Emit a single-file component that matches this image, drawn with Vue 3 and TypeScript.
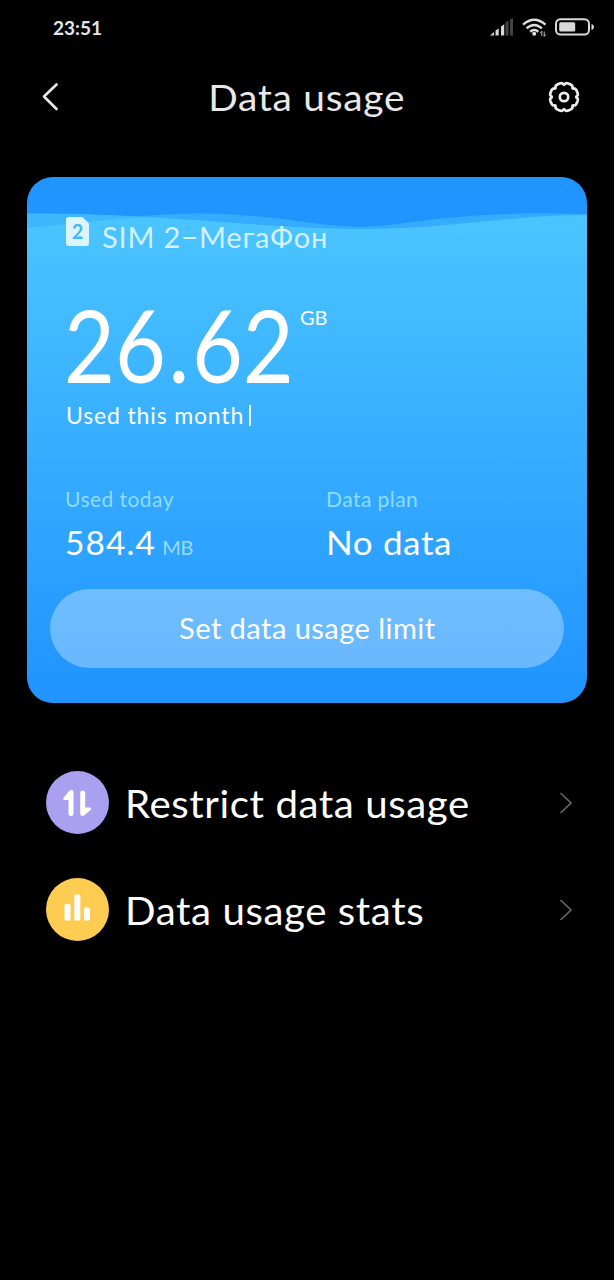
<script setup lang="ts">
interface MenuItem {
  label: string
  kind: 'arrows' | 'bars'
}

const items: MenuItem[] = [
  { label: 'Restrict data usage', kind: 'arrows' },
  { label: 'Data usage stats', kind: 'bars' },
]

// Gear outline: radius dips at evenly spaced notches around the rim.
const teeth = 8
const gearPath = Array.from({ length: 192 }, (_, i) => {
  const a = (i / 192) * Math.PI * 2
  const notch = Math.pow(Math.abs(Math.cos((a * teeth) / 2)), 12)
  const r = 14.1 - 1.9 * notch
  return `${i ? 'L' : 'M'}${(16 + r * Math.cos(a)).toFixed(2)} ${(16 + r * Math.sin(a)).toFixed(2)}`
}).join('') + 'Z'
</script>

<template>
  <div class="screen">
    <div class="status">
      <span class="clock">23:51</span>
      <svg class="indicators" width="106" height="20" viewBox="0 0 106 20">
        <g fill="#d8d8d8">
          <path d="M0 17.500 4 14v3.500zM5.500 12.500l3.200-2v7H5.500zM11 8.500l3.200-2.200v11.200H11z" />
          <path d="M15.500 4.500l3-2v15h-3zM20 1.800l3-2v17.700h-3z" fill="#444" />
        </g>
        <g fill="none" stroke="#e0e0e0" stroke-width="2.400">
          <path d="M33 6.700Q44.200-3.300 55.500 6.700M36.600 10.400Q44.200 3.500 51.900 10.400M40.200 13.700Q44.200 10.400 48.300 13.700" />
        </g>
        <circle cx="44.200" cy="15.800" r="2" fill="#e0e0e0" />
        <path d="M51.800 18v-5l-1.500 2M54.200 13.500v5l1.500-2" fill="none" stroke="#bbb" stroke-width="1" />
        <rect x="66" y="1.200" width="33" height="15.300" rx="4.500" fill="none" stroke="#d8d8d8" stroke-width="2" />
        <rect x="69.200" y="4.300" width="16" height="9.200" rx="1.500" fill="#d8d8d8" />
        <path d="M101.500 6q2.500.4 2.500 3t-2.500 3z" fill="#d8d8d8" />
      </svg>
    </div>

    <header class="bar">
      <svg class="back" width="20" height="30" viewBox="0 0 20 30">
        <path d="M16.500 2.500 4 14.500 16.500 27" fill="none" stroke="#e6e6e6" stroke-width="2.700" stroke-linecap="round" stroke-linejoin="round" />
      </svg>
      <h1 class="title">Data usage</h1>
      <svg class="gear" width="32" height="32" viewBox="0 0 32 32">
        <path :d="gearPath" fill="none" stroke="#ececec" stroke-width="2.700" stroke-linejoin="round" />
        <circle cx="16" cy="16" r="4.200" fill="none" stroke="#ececec" stroke-width="2.700" />
      </svg>
    </header>

    <section class="card">
      <svg class="waves" width="560" height="56" viewBox="0 0 560 56">
        <path d="M0 36.500C60 36 110 39 180 44S280 52 340 52C420 52 480 38.500 560 38V56H0Z" fill="#4ac3ff" fill-opacity=".75" />
        <path d="M0 51C60 46 90 38 170 36.500C240 36 290 50 335 50C390 47 420 36 520 36.500L560 37V56H0Z" fill="#4ac3ff" fill-opacity=".5" />
        <path d="M0 51C60 46 90 41 130 40.500C200 45 270 52 340 52C420 52 480 38.500 560 38V56H0Z" fill="#4ac3ff" />
      </svg>
      <div class="content">
        <div class="sim">
          <span class="sim-icon">
            <svg width="23" height="29" viewBox="0 0 23 29">
              <path d="M3 0h13.500L23 6.500V26a3 3 0 0 1-3 3H3a3 3 0 0 1-3-3V3a3 3 0 0 1 3-3z" fill="#dcf4ff" />
            </svg>
            <b>2</b>
          </span>
          <span class="sim-name">SIM 2−МегаФон</span>
        </div>
        <div class="total">
          <span class="amount">26<i>.</i>62</span>
          <span class="gb">GB</span>
        </div>
        <div class="month"><span>Used this month</span><i class="caret"></i></div>
        <div class="stats">
          <div>
            <div class="label">Used today</div>
            <div class="value"><span>584.4</span><small>MB</small></div>
          </div>
          <div>
            <div class="label">Data plan</div>
            <div class="value plan">No data</div>
          </div>
        </div>
        <button class="limit" type="button"><span>Set data usage limit</span></button>
      </div>
    </section>

    <nav class="list">
      <div v-for="item in items" :key="item.kind" class="row">
        <span class="badge" :class="item.kind">
          <svg v-if="item.kind === 'arrows'" width="63" height="63" viewBox="0 0 63 63">
            <path d="M23.500 19.500Q27.500 17.500 27.500 22V42.500a2.500 2.500 0 0 1-5 0V29H18.500q-2.500-.7-.5-2.700zM34.200 22a2.500 2.500 0 0 1 5 0V36.500h4.600q2.500.5.700 2.500l-6.500 5.500q-3.800 1.500-3.800-2z" fill="#fff" />
          </svg>
          <svg v-else width="63" height="63" viewBox="0 0 63 63" fill="#fff">
            <rect x="18.500" y="26" width="6" height="16.500" rx="1.500" />
            <rect x="28.300" y="16.500" width="6" height="26" rx="1.500" />
            <rect x="38" y="29.500" width="6" height="13" rx="1.500" />
          </svg>
        </span>
        <span class="row-label">{{ item.label }}</span>
        <svg class="chev" width="14" height="24" viewBox="0 0 14 24">
          <path d="M1.500 2 12 12 1.500 22" fill="none" stroke="#666" stroke-width="1.700" />
        </svg>
      </div>
    </nav>
  </div>
</template>

<style>
html, body { background: #000; }
</style>

<style scoped>
.screen {
  width: 614px;
  height: 1280px;
  background: #000;
  color: #fff;
  font-family: Lato, "Noto Sans", sans-serif;
  font-variant-ligatures: none;
  overflow: hidden;
}
.status {
  display: flex;
  justify-content: space-between;
  height: 54px;
  padding: 18px 18px 0 53px;
  box-sizing: border-box;
}
.clock { font-size: 19px; line-height: 20px; font-weight: 700; color: #e6e6e6; }
.bar {
  display: flex;
  align-items: center;
  justify-content: space-between;
  height: 85px;
  padding: 0 34px 0 40px;
}
.title {
  margin: 0 0 0 6px;
  font-size: 37px;
  line-height: 44px;
  font-weight: 400;
  letter-spacing: .7px;
  transform: scaleX(1.05);
  color: #e8e8e8;
  white-space: nowrap;
}
.card {
  position: relative;
  width: 560px;
  height: 526px;
  margin: 38px 27px 0;
  border-radius: 26px;
  overflow: hidden;
  background: linear-gradient(#2195ff 0 55px, #4ac3ff 55px, #2093ff 100%);
}
.waves { position: absolute; left: 0; top: 0; }
.content { position: relative; padding: 40px 23px 0; }
.sim { display: flex; height: 40px; padding-left: 16px; }
.sim-icon { position: relative; width: 23px; height: 29px; margin-right: 13px; }
.sim-icon b { position: absolute; inset: 0; text-align: center; font-size: 20px; line-height: 29px; color: #46b8fa; }
.sim-name { font-size: 29px; line-height: 40px; letter-spacing: .85px; color: #d4f1ff; white-space: nowrap; }
.total { display: flex; height: 100px; margin-top: 37px; padding-left: 14px; }
.amount { width: 236px; font-size: 101px; line-height: 100px; transform: scaleX(.87); transform-origin: 0 0; }
.amount i { font-style: normal; margin: 0 3px; }
.gb { font-size: 20px; line-height: 24px; padding-top: 11px; }
.month { display: flex; align-items: center; height: 28px; margin-top: 7px; padding-left: 16px; font-size: 23px; line-height: 28px; letter-spacing: .85px; }
.caret { width: 2px; height: 21px; margin-left: 5px; background: #e8f7ff; }
.stats { display: grid; grid-template-columns: 261px 1fr; margin-top: 56px; padding-left: 15px; white-space: nowrap; }
.label { font-size: 21px; line-height: 28px; letter-spacing: .45px; color: #8fdcff; }
.value { height: 40px; margin-top: 9px; font-size: 33.5px; line-height: 40px; letter-spacing: 1.1px; }
.value.plan { letter-spacing: .6px; transform: scaleX(1.045); transform-origin: 0 0; }
.value small { margin-left: 6px; font-size: 20px; letter-spacing: -.3px; color: #98dcff; }
.limit {
  display: block;
  width: 514px;
  height: 79px;
  margin-top: 27px;
  padding: 0;
  border: 0;
  border-radius: 40px;
  background: rgba(255, 255, 255, .32);
  color: #fff;
  font: 400 28px/79px Lato, sans-serif;
  letter-spacing: .4px;
}
.limit span { display: inline-block; transform: scaleX(1.04); }
.list { display: flex; flex-direction: column; gap: 44px; padding: 68px 41px 0 46px; }
.row { display: flex; align-items: center; height: 63px; }
.badge { width: 63px; height: 63px; border-radius: 50%; }
.badge.arrows { background: #a9a0ef; }
.badge.bars { background: #ffcc52; }
.row-label {
  flex: 1;
  margin-left: 16px;
  font-size: 38.5px;
  line-height: 46px;
  letter-spacing: .55px;
  transform: scaleX(1.045);
  transform-origin: 0 50%;
  white-space: nowrap;
}
</style>
